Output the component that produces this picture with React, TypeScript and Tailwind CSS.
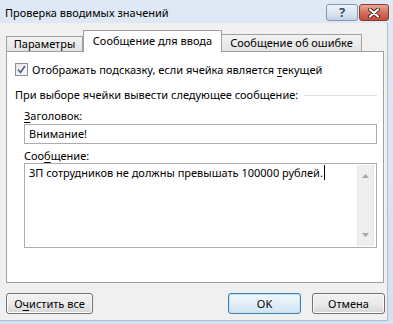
import React from "react";

const U = ({ children }: { children: React.ReactNode }) => (
  <span className="underline underline-offset-2">{children}</span>
);

const Btn = ({
  children,
  primary,
  className,
}: {
  children: React.ReactNode;
  primary?: boolean;
  className?: string;
}) => (
  <div
    className={
      "h-[21px] rounded-[3px] border flex items-center justify-center " +
      (primary
        ? "border-[#3c7fb1] bg-gradient-to-b from-[#f2f8fc] via-[#e3eef7] to-[#cfe2f1] shadow-[inset_0_0_0_1px_#c2e2f7] "
        : "border-[#707070] bg-gradient-to-b from-[#f2f2f2] via-[#ebebeb] to-[#d6d6d6] shadow-[inset_0_0_0_1px_#fcfcfc] ") +
      (className ?? "")
    }
  >
    {children}
  </div>
);

export default function App() {
  return (
    <div
      className="w-[393px] h-[324px] overflow-hidden bg-gradient-to-b from-[#dfe9f5] to-[#d4e1f1] text-[11px] leading-[16px] text-black flex flex-col"
      style={{ fontFamily: '"Noto Sans", "Segoe UI", sans-serif' }}
    >
      {/* title bar */}
      <div className="h-[23px] flex items-start justify-between shrink-0">
        <div className="pl-[5px] pt-[5px]">Проверка вводимых значений</div>
        <div className="flex gap-[1px] pt-[4px] pr-[4px]">
          <div className="w-[32px] h-[17px] rounded-[3px] border border-[#8497b3] bg-gradient-to-b from-[#edf3fa] via-[#dbe6f3] to-[#c3d4e8] flex items-center justify-center">
            <span className="text-[13px] leading-[13px] font-bold text-[#3a4a60] [text-shadow:0_0_2px_#fff]">?</span>
          </div>
          <div className="w-[30px] h-[17px] rounded-[3px] border border-[#8e3a2f] bg-gradient-to-b from-[#e8a797] via-[#d4705f] to-[#c44b3a] flex items-center justify-center">
            <svg width="14" height="10" viewBox="0 0 14 10">
              <path d="M3 1.5 L11 8.5 M11 1.5 L3 8.5" stroke="#4b2420" strokeWidth="4" strokeLinecap="round" />
              <path d="M3 1.5 L11 8.5 M11 1.5 L3 8.5" stroke="#ffffff" strokeWidth="2.2" strokeLinecap="round" />
            </svg>
          </div>
        </div>
      </div>

      {/* body */}
      <div className="w-[388px] h-[298px] bg-[#f0f0f0] border-r border-b border-[#aebfd4] shrink-0 flex flex-col">
        {/* tabs */}
        <div className="relative z-10 flex items-end h-[28px] pl-[6px]">
          <div className="w-[77px] h-[15px] border border-b-0 border-[#a0a0a0] bg-gradient-to-b from-[#f3f3f3] to-[#e3e3e3] flex items-center justify-center">
            Параметры
          </div>
          <div className="w-[139px] h-[22px] -mb-px border border-b-0 border-[#a0a0a0] bg-white flex items-start justify-center pt-[2px]">
            Сообщение для ввода
          </div>
          <div className="w-[140px] h-[17px] border border-b-0 border-l-0 border-[#a0a0a0] bg-gradient-to-b from-[#f3f3f3] to-[#e3e3e3] flex items-center justify-center">
            Сообщение об ошибке
          </div>
        </div>

        {/* panel */}
        <div className="ml-[6px] w-[378px] h-[232px] border border-[#a0a0a0] bg-white flex flex-col">
          <div className="mt-[11px] ml-[8px] flex items-center h-[13px]">
            <div className="w-[13px] h-[13px] border border-[#8f8f8f] bg-gradient-to-br from-[#e6e6e6] to-[#ffffff] flex items-center justify-center">
              <svg width="9" height="9" viewBox="0 0 9 9">
                <path d="M1 4.5 L3.5 7.5 L8 1" fill="none" stroke="#4a5f97" strokeWidth="1.6" />
              </svg>
            </div>
            <span className="ml-[4px]">
              Отображать подсказку, если ячейка является <U>т</U>екущей
            </span>
          </div>

          <div className="mt-[11px] ml-[8px] mr-[6px] flex items-center">
            <span>При выборе ячейки вывести следующее сообщение:</span>
            <div className="flex-1 ml-[6px] h-px bg-[#d5dfe5]" />
          </div>

          <div className="ml-[17px] mr-[6px]">
            <div className="mt-[5px]">
              <U>З</U>аголовок:
            </div>
            <div className="h-[20px] border border-[#abadb3] flex items-center pl-[4px]">Внимание!</div>
            <div className="mt-[4px] h-[15px] leading-[15px]">
              Соо<U>б</U>щение:
            </div>
            <div className="h-[85px] border border-[#abadb3] flex">
              <div className="flex-1 pl-[4px] pt-[1px] flex items-start">
                <span>ЗП сотрудников не должны превышать 100000 рублей.</span>
                <span className="w-px h-[15px] bg-black ml-[1px]" />
              </div>
              <div className="w-[17px] my-[1px] mr-[2px] bg-[#eeeeee] border-x border-[#e4e4e4] flex flex-col items-center justify-between py-[9px]">
                <svg width="7" height="4" viewBox="0 0 7 4">
                  <path d="M0 4 L3.5 0 L7 4 Z" fill="#a6a6a6" />
                </svg>
                <svg width="7" height="4" viewBox="0 0 7 4">
                  <path d="M0 0 L3.5 4 L7 0 Z" fill="#a6a6a6" />
                </svg>
              </div>
            </div>
          </div>
        </div>

        {/* buttons */}
        <div className="mt-[10px] flex pl-[6px]">
          <Btn className="w-[87px]">
            О<U>ч</U>истить все
          </Btn>
          <Btn primary className="w-[73px] ml-[135px]">
            OK
          </Btn>
          <Btn className="w-[73px] ml-[11px]">Отмена</Btn>
        </div>
      </div>
    </div>
  );
}
